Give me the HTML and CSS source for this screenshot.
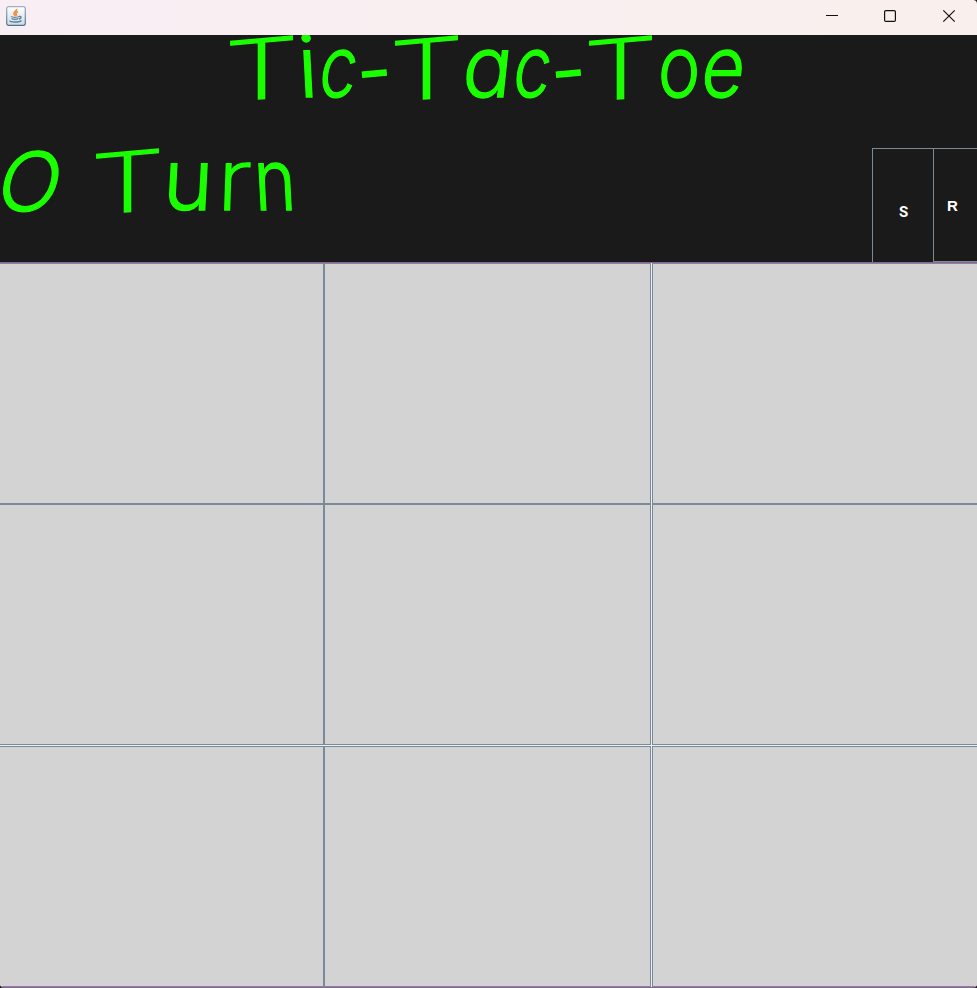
FILE: index.html
```html
<!DOCTYPE html>
<html lang="en">
<head>
<meta charset="utf-8">
<title>Tic-Tac-Toe</title>
<link rel="stylesheet" href="styles.css">
</head>
<body>
<div class="window">
  <header class="titlebar">
    <svg class="app-icon" width="20" height="20" viewBox="0 0 20 20" fill="none">
      <defs><linearGradient id="tile" x1="0" y1="0" x2="0" y2="1"><stop offset="0" stop-color="#fff"/><stop offset="1" stop-color="#cfdae2"/></linearGradient><linearGradient id="edge" x1="0" y1="0" x2="0" y2="1"><stop offset="0" stop-color="#9bb0c0"/><stop offset="1" stop-color="#4b7692"/></linearGradient></defs>
      <rect x=".7" y=".7" width="18.6" height="18.6" rx="2" fill="url(#tile)" stroke="url(#edge)" stroke-width="1.2"/>
      <path d="M10.500 3c1 2-3.500 3-2.500 5l1.500 2M12 5.500c-3 1.500-2.500 2-1 4" stroke="#ef9140" stroke-width="1.700"/>
      <path d="M5 10.500c2 1 6 1 8 0M5.500 12.500c2 1 5 1 7 0M13 10.500c3-.5 2.500 2 0 2.500M4 14.500c-1 2 10 2 11.500 0" stroke="#5d809b" stroke-width="1.300"/>
    </svg>
    <svg class="controls" width="136" height="14" viewBox="0 0 136 14" fill="none" stroke="#111" stroke-width="1.200">
      <path d="M1 6.500h12"/>
      <rect x="59.600" y="1.600" width="10.800" height="10.800" rx="1.200"/>
      <path d="M118.300 1.300l11.400 11.400M129.700 1.300l-11.400 11.400"/>
    </svg>
  </header>
  <section class="banner">
    <h1 class="script heading"><span class="cell t"><b>T</b></span><span class="cell i"><b>i</b></span><span class="cell c"><b>c</b></span><span class="cell dash"><b>-</b></span><span class="cell t"><b>T</b></span><span class="cell a"><b>a</b></span><span class="cell c"><b>c</b></span><span class="cell dash"><b>-</b></span><span class="cell t"><b>T</b></span><span class="cell o"><b>o</b></span><span class="cell e"><b>e</b></span></h1>
    <div class="status">
      <div class="script turn"><span class="cell cap-o"><b>O</b></span><span class="cell space"> </span><span class="cell t"><b>T</b></span><span class="cell u"><b>u</b></span><span class="cell r"><b>r</b></span><span class="cell n"><b>n</b></span></div>
      <button class="key key-s">S</button>
      <button class="key key-r">R</button>
    </div>
  </section>
  <main class="board">
    <button></button><button></button><button class="last"></button>
    <button></button><button></button><button class="last"></button>
    <button class="low"></button><button class="low"></button><button class="last low"></button>
  </main>
</div>
</body>
</html>
```
FILE: styles.css
```css
* { box-sizing: border-box; }
body { margin: 0; background: #1a1a1a; }
.window { width: 977px; height: 988px; overflow: hidden; border-radius: 0 4px 4px 4px; border-bottom: 1px solid #995c99; font-family: "Liberation Sans", sans-serif; }
.titlebar { position: relative; z-index: 1; height: 35px; padding: 6px 16px 0 6px; display: flex; justify-content: space-between; align-items: flex-start; background: linear-gradient(90deg, #f9eef4, #f9f0ed); }
.controls { margin: 3px 0 0; }
.banner { height: 228px; background: #1a1a1a; border-bottom: 1px solid #995c99; }
.script { display: flex; margin: 0; height: 113px; font-family: Inter, sans-serif; font-size: 85px; font-weight: 300; line-height: 63px; color: #1aff00; -webkit-text-stroke: 1.3px #1aff00; font-feature-settings: "cv11"; }
.heading { padding-left: 225px; }
.cell { display: flex; justify-content: center; flex: none; white-space: pre; }
.cell b { font-weight: inherit; display: block; flex: none; }
.t { width: 71px; }
.t b { font-weight: 200; transform: translate(1px, 2px) skewY(-5deg) scale(1.4, .97); -webkit-text-stroke-width: 1.5px; }
.i { width: 22px; }
.i b { transform: translateX(2px) skewX(3deg); }
.c { width: 41px; }
.c b { transform: translateX(-3px) skewX(-8deg) scaleX(.78); }
.dash { width: 31px; }
.dash b { transform: translate(2px, 3px) rotate(-5deg) scaleX(.92); }
.a { width: 51px; }
.a b { transform: translateX(-1px) skewX(-6deg) scaleX(.97); }
.o { width: 43px; }
.o b { transform: translateX(2px) skewX(-3deg) scaleX(.84); }
.e { width: 46px; }
.e b { transform: skewX(-8deg) scaleX(.87); }
.status { height: 114px; display: flex; }
.turn { flex: 1; }
.cap-o { width: 62px; }
.cap-o b { transform: translate(-6px, 1px) skewX(-13deg) scale(.97, .96); }
.space { width: 29px; }
.u { width: 51px; }
.u b { transform: skewX(-3deg); }
.r { width: 45px; }
.r b { font-weight: 200; transform: translateX(-2px) skewX(-2deg) scaleX(1.22); }
.n { width: 37px; }
.n b { transform: translateX(-1px) skewX(3deg) scaleX(.84); }
.key { padding: 0; border: 1px solid #7a8a99; border-right: 0; background: #1a1a1a; color: #fff; font: bold 15px Roboto, "Liberation Sans", sans-serif; }
.key-s { width: 61px; height: 114px; padding: 13px 0 0 1px; border-bottom: 0; }
.key-r { width: 44px; height: 114px; padding: 1px 6px 0 0; font-family: "Liberation Sans", sans-serif; }
.board { height: 724px; display: grid; grid-template-columns: 324px 327px 326px; grid-template-rows: 241px 241px 242px; background: #eee; }
.board button { padding: 0; border: 1px solid #7a8a99; background: #d3d3d3; }
.board button:nth-child(3n+1) { border-left: 0; }
.board .last { margin-left: 1px; border-right: 0; }
.board .low { margin-top: 1px; }
```
